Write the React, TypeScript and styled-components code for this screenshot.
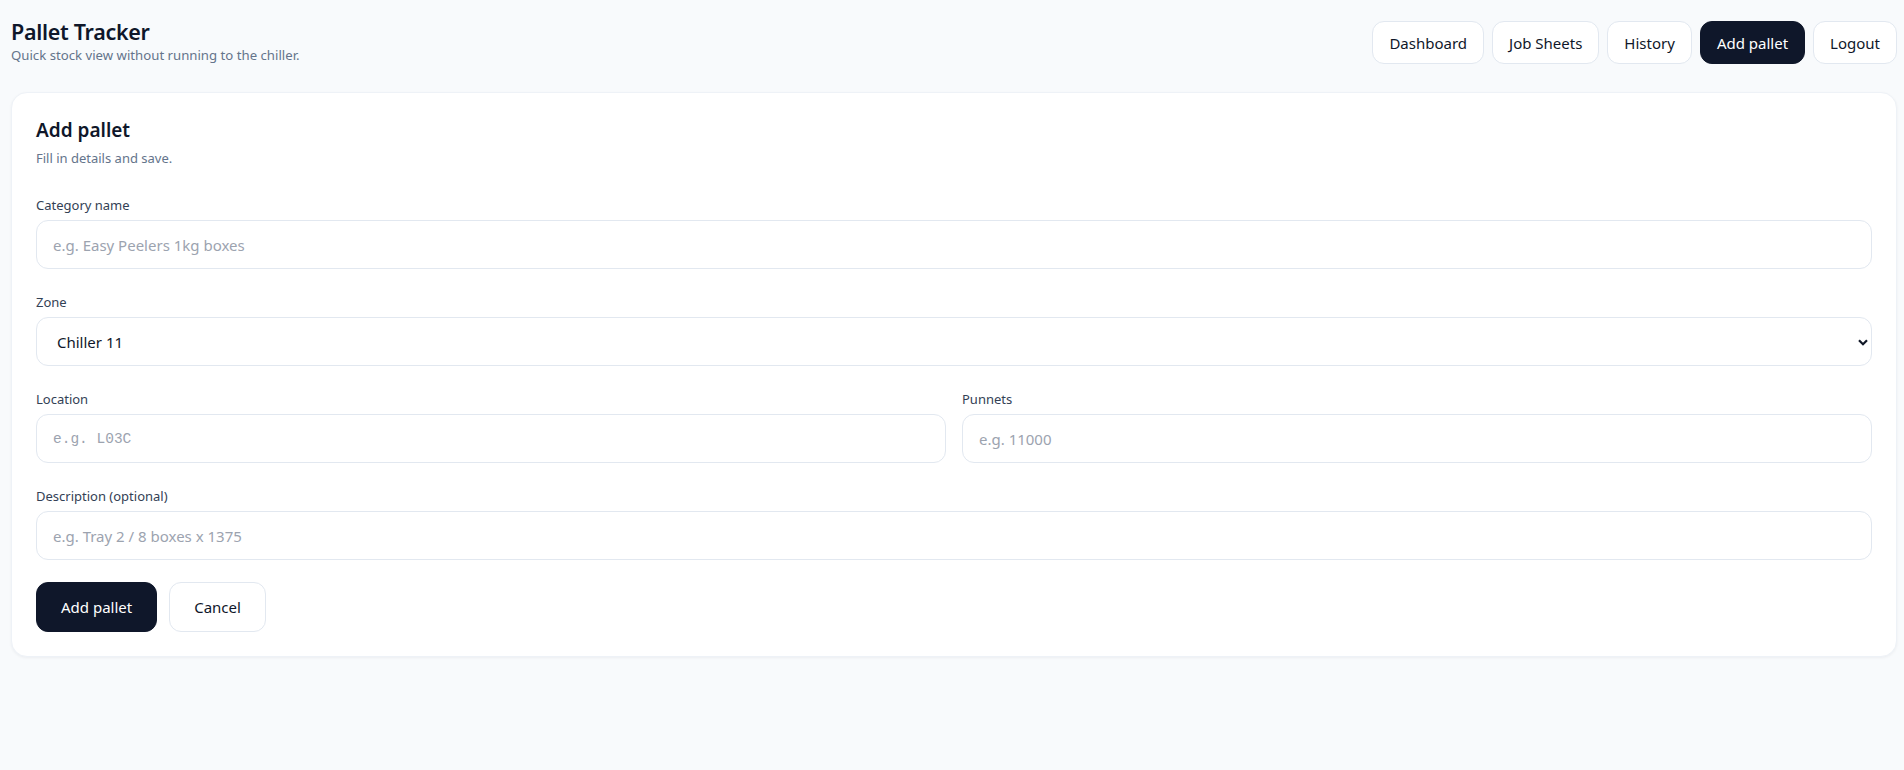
import React from "react";
import styled, { createGlobalStyle } from "styled-components";

const GlobalStyle = createGlobalStyle`
  html, body {
    margin: 0;
    padding: 0;
    background: #f8fafc;
  }
  body {
    font-family: "Noto Sans", "Open Sans", sans-serif;
    color: #0f172a;
  }
  * { box-sizing: border-box; }
`;

const Page = styled.div`
  padding: 17px 7px 24px 11px;
  min-height: 770px;
  background: #f8fafc;
`;

const Header = styled.header`
  display: flex;
  justify-content: space-between;
  align-items: flex-end;
`;

const Brand = styled.div`
  display: flex;
  flex-direction: column;
`;

const Title = styled.h1`
  margin: 0;
  font-size: 21.5px;
  line-height: 29px;
  font-weight: 600;
  color: #0f172a;
  letter-spacing: -0.3px;
`;

const Subtitle = styled.p`
  margin: 0;
  font-size: 13.2px;
  line-height: 18px;
  color: #64748b;
`;

const Nav = styled.nav`
  display: flex;
  gap: 8px;
`;

const NavButton = styled.button<{ $active?: boolean }>`
  height: 43px;
  padding: 0 16px;
  border-radius: 12px;
  border: 1px solid ${(p) => (p.$active ? "#0f172a" : "#e2e8f0")};
  background: ${(p) => (p.$active ? "#0f172a" : "#ffffff")};
  color: ${(p) => (p.$active ? "#ffffff" : "#0f172a")};
  font-family: inherit;
  font-size: 15px;
  cursor: pointer;
`;

const Card = styled.section`
  margin-top: 28px;
  background: #ffffff;
  border: 1px solid #eef2f7;
  border-radius: 16px;
  box-shadow: 0 1px 3px rgba(15, 23, 42, 0.05);
  padding: 24px;
`;

const CardTitle = styled.h2`
  margin: 0;
  font-size: 19px;
  line-height: 26px;
  font-weight: 600;
  color: #0f172a;
`;

const CardHint = styled.p`
  margin: 6px 0 0;
  font-size: 13px;
  line-height: 18px;
  color: #64748b;
`;

const Form = styled.form`
  margin-top: 29px;
  display: flex;
  flex-direction: column;
  gap: 24px;
`;

const Row = styled.div`
  display: grid;
  grid-template-columns: 1fr 1fr;
  gap: 16px;
`;

const Field = styled.label`
  display: flex;
  flex-direction: column;
  gap: 6px;
`;

const Label = styled.span`
  font-size: 13px;
  line-height: 18px;
  color: #334155;
`;

const Input = styled.input<{ $mono?: boolean }>`
  height: 49px;
  width: 100%;
  padding: 0 16px;
  border: 1px solid #e2e8f0;
  border-radius: 12px;
  background: #ffffff;
  font-family: ${(p) => (p.$mono ? '"Liberation Mono", "DejaVu Sans Mono", monospace' : "inherit")};
  font-size: ${(p) => (p.$mono ? "14.5px" : "15px")};
  color: #0f172a;
  outline: none;
  &::placeholder {
    color: #9ca3af;
  }
`;

const SelectWrap = styled.div`
  position: relative;
`;

const Select = styled.select`
  appearance: none;
  -webkit-appearance: none;
  height: 49px;
  width: 100%;
  padding: 0 16px 0 20px;
  border: 1px solid #e2e8f0;
  border-radius: 12px;
  background: #ffffff;
  font-family: inherit;
  font-size: 15px;
  color: #0f172a;
  outline: none;
`;

const Chevron = styled.svg`
  position: absolute;
  right: 2.5px;
  top: 50%;
  transform: translateY(-50%);
  pointer-events: none;
`;

const Actions = styled.div`
  display: flex;
  gap: 12px;
  margin-top: -2px;
`;

const Button = styled.button<{ $primary?: boolean }>`
  height: 50px;
  padding: 0 24px;
  border-radius: 12px;
  border: 1px solid ${(p) => (p.$primary ? "#0f172a" : "#e2e8f0")};
  background: ${(p) => (p.$primary ? "#0f172a" : "#ffffff")};
  color: ${(p) => (p.$primary ? "#ffffff" : "#0f172a")};
  font-family: inherit;
  font-size: 15px;
  cursor: pointer;
`;

export default function App() {
  return (
    <>
      <GlobalStyle />
      <Page>
        <Header>
          <Brand>
            <Title>Pallet Tracker</Title>
            <Subtitle>Quick stock view without running to the chiller.</Subtitle>
          </Brand>
          <Nav>
            <NavButton>Dashboard</NavButton>
            <NavButton>Job Sheets</NavButton>
            <NavButton>History</NavButton>
            <NavButton $active>Add pallet</NavButton>
            <NavButton>Logout</NavButton>
          </Nav>
        </Header>
        <Card>
          <CardTitle>Add pallet</CardTitle>
          <CardHint>Fill in details and save.</CardHint>
          <Form onSubmit={(e) => e.preventDefault()}>
            <Field>
              <Label>Category name</Label>
              <Input placeholder="e.g. Easy Peelers 1kg boxes" />
            </Field>
            <Field>
              <Label>Zone</Label>
              <SelectWrap>
                <Select defaultValue="Chiller 11">
                  <option>Chiller 11</option>
                  <option>Chiller 12</option>
                </Select>
                <Chevron width="14" height="14" viewBox="0 0 14 14">
                  <path d="M3 5.2 L7 9.2 L11 5.2" fill="none" stroke="#111827" strokeWidth="2.2" />
                </Chevron>
              </SelectWrap>
            </Field>
            <Row>
              <Field>
                <Label>Location</Label>
                <Input $mono placeholder="e.g. L03C" />
              </Field>
              <Field>
                <Label>Punnets</Label>
                <Input placeholder="e.g. 11000" />
              </Field>
            </Row>
            <Field>
              <Label>Description (optional)</Label>
              <Input placeholder="e.g. Tray 2 / 8 boxes x 1375" />
            </Field>
            <Actions>
              <Button $primary type="submit">Add pallet</Button>
              <Button type="button">Cancel</Button>
            </Actions>
          </Form>
        </Card>
      </Page>
    </>
  );
}
